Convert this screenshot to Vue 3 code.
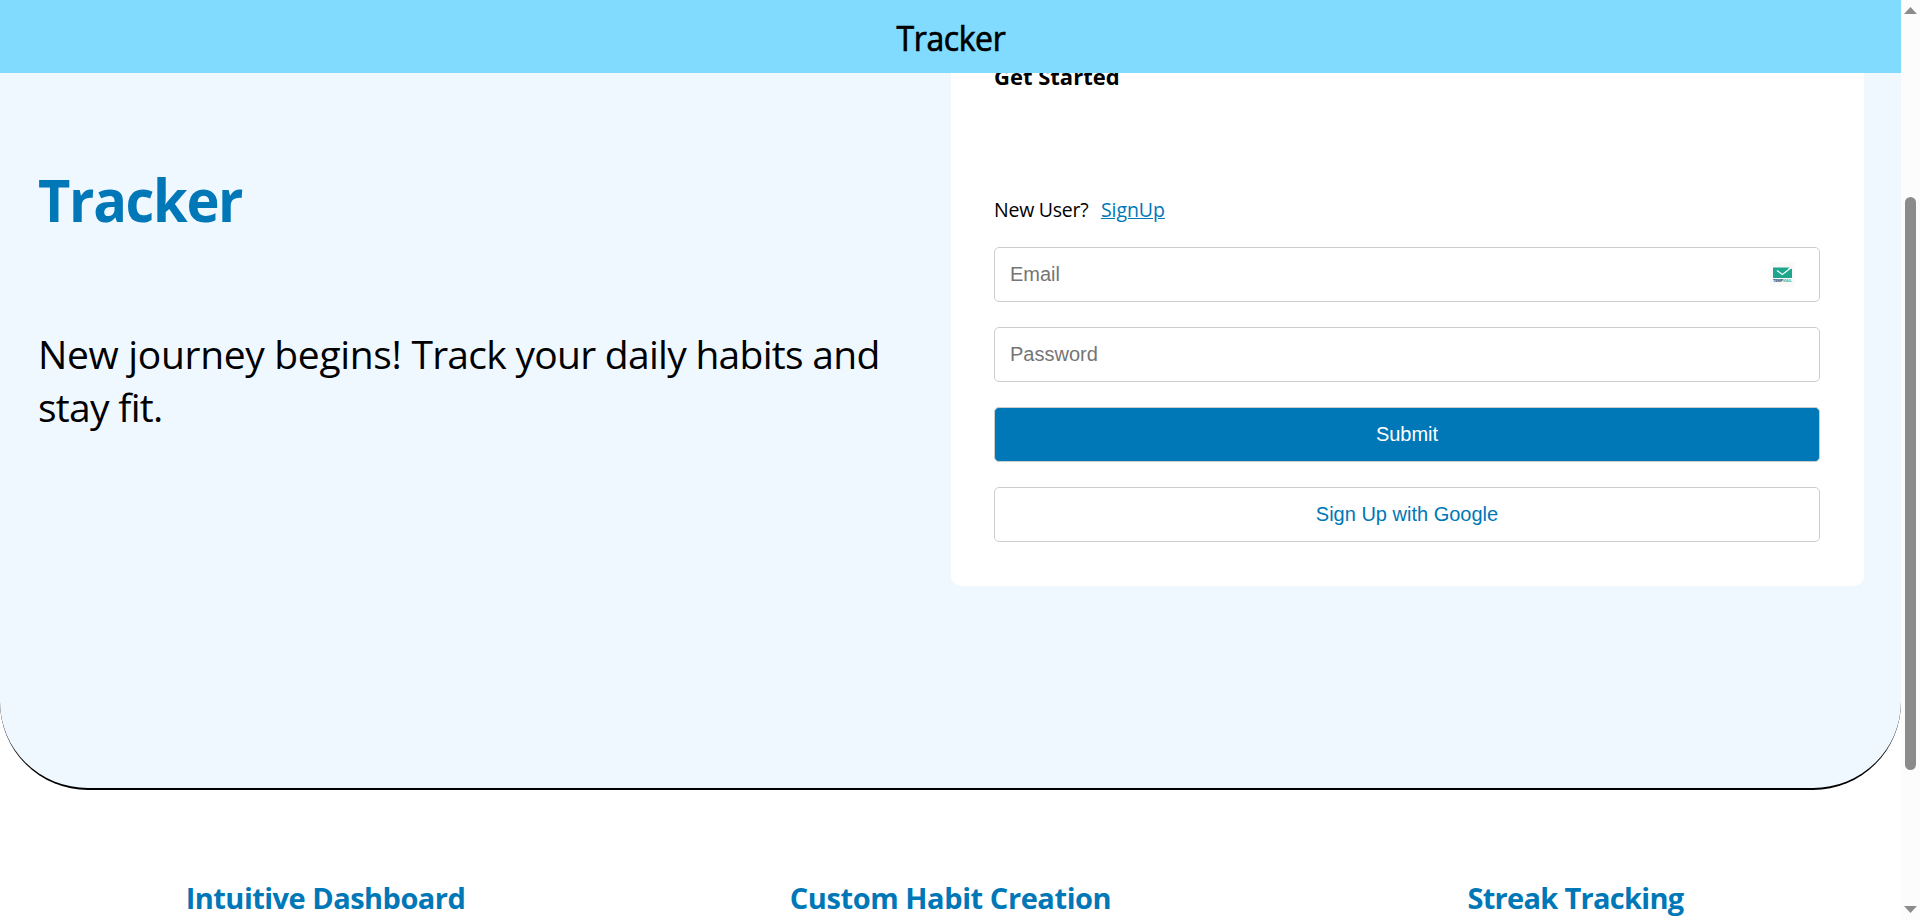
<script setup>
const features = [
  { title: 'Intuitive Dashboard', cls: 'f1' },
  { title: 'Custom Habit Creation', cls: 'f2' },
  { title: 'Streak Tracking', cls: 'f3' },
]
</script>

<template>
  <div class="window">
    <div class="page">
      <header class="topbar"><span class="brand">Tracker</span></header>
      <main class="hero">
        <section class="intro">
          <h1><span>Tracker</span></h1>
          <p><span class="lead">New journey begins! </span>Track your daily habits and<br>stay fit.</p>
        </section>
        <form class="card" @submit.prevent>
          <h2>Get Started</h2>
          <div class="new-user"><span class="ask">New User?</span><a href="#">SignUp</a></div>
          <div class="field">
            <input type="email" placeholder="Email">
            <svg class="mail" width="25" height="25" viewBox="0 0 25 25">
              <rect width="25" height="25" rx="2" fill="#fafafa" />
              <path d="M3 5.5H19.5L17.5 7.2L22 6.8V16H3Z" fill="#1fa58c" />
              <path d="M7 8.5L12.3 12.5L20.5 6.3" fill="none" stroke="#e9fffa" stroke-width="1.3" />
              <text x="3" y="20" font-size="3.8" font-weight="700" textLength="10" fill="#25304f">TEMP</text>
              <text x="13" y="20" font-size="3.8" font-weight="700" textLength="9" fill="#35bda5">MAIL</text>
            </svg>
          </div>
          <div class="field"><input type="password" placeholder="Password"></div>
          <button class="primary" type="submit">Submit</button>
          <button type="button">Sign Up with Google</button>
        </form>
      </main>
      <section class="features">
        <h3 v-for="f in features" :key="f.title" :class="f.cls">{{ f.title }}</h3>
      </section>
    </div>
    <aside class="scrollbar">
      <svg width="13" height="7" viewBox="0 0 13 7"><path d="M0 7L6.5 0L13 7Z" fill="#8b8b8b" /></svg>
      <div class="thumb"></div>
      <svg class="down" width="13" height="7" viewBox="0 0 13 7"><path d="M0 0H13L6.5 7Z" fill="#8b8b8b" /></svg>
    </aside>
  </div>
</template>

<style>
html, body { margin: 0; overflow: hidden; background: #fff; }
</style>

<style scoped>
* { box-sizing: border-box; }
.window { display: flex; width: 1920px; height: 920px; overflow: hidden; font-family: "Open Sans", "Noto Sans", sans-serif; color: #000; }
.page { width: 1901px; height: 920px; overflow: hidden; }
.topbar { height: 73px; background: #80dbff; display: flex; justify-content: center; padding-top: 14px; line-height: 48px; font-size: 34px; font-weight: 500; }
.brand { display: inline-block; letter-spacing: -0.4px; transform: scaleX(0.94); -webkit-text-stroke: 0.7px #000; }
h1, h2, h3, p { margin: 0; white-space: nowrap; }
.hero { height: 717px; padding: 0 37px 0 38px; display: flex; justify-content: space-between; background: #eff7ff; border-bottom: 2px solid #000; border-radius: 0 0 88px 88px; }
.intro { padding-top: 86px; }
h1 { font-size: 59px; line-height: 80px; font-weight: 700; color: #0077b6; }
h1 span { display: inline-block; letter-spacing: -1.4px; transform: scaleX(0.948); transform-origin: left; }
p { margin: 88px 0 0; font-size: 39px; line-height: 53px; letter-spacing: -0.72px; }
.lead { letter-spacing: -0.33px; }
.card { width: 913px; height: 513px; background: #fff; border-radius: 0 0 10px 10px; padding: 0 44px 0 43px; display: flex; flex-direction: column; overflow: hidden; }
h2 { height: 30px; margin-top: -12px; font-size: 22px; line-height: 30px; font-weight: 700; }
.new-user { height: 28px; margin: 105px 0 23px; display: flex; gap: 12.5px; font-size: 19.5px; line-height: 28px; letter-spacing: -0.25px; }
a { color: #0077b6; text-decoration: underline; letter-spacing: -0.05px; }
.field { position: relative; height: 55px; margin-bottom: 25px; }
input, button { display: block; width: 100%; height: 55px; border: 1px solid #ccc; border-radius: 5px; background: #fff; font: 20px "Liberation Sans", Arial, sans-serif; }
input { padding: 0 15px; }
input::placeholder { color: #757575; }
button { margin-bottom: 25px; color: #0077b6; flex: none; }
.primary { background: #0077b6; color: #fff; }
.mail { position: absolute; right: 25px; top: 15px; font-family: "Liberation Sans", sans-serif; }
.features { display: grid; grid-template-columns: 651px 599px 651px; padding-top: 88px; text-align: center; }
h3 { font-size: 29px; line-height: 40px; color: #0077b6; font-weight: 700; }
.f1 { letter-spacing: -0.52px; }
.f2 { letter-spacing: -0.42px; }
.f3 { letter-spacing: -0.7px; }
.scrollbar { width: 19px; height: 920px; background: #fcfcfc; display: flex; flex-direction: column; align-items: center; padding: 7px 0; }
.thumb { width: 11px; height: 573px; margin-top: 183px; border-radius: 6px; background: #8b8b8b; }
.down { margin-top: auto; }
svg { display: block; }
</style>
